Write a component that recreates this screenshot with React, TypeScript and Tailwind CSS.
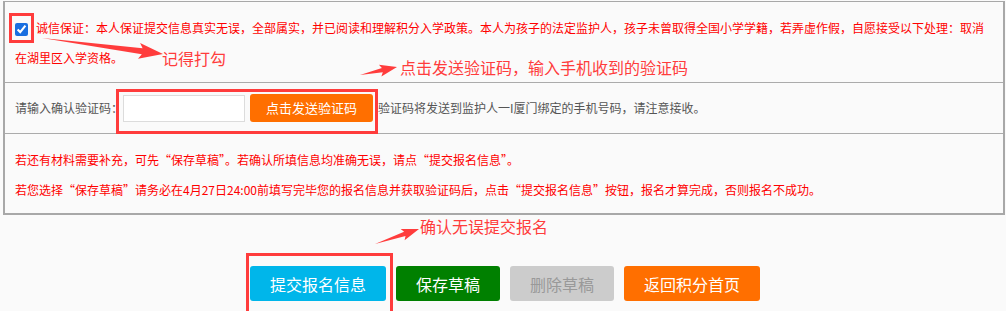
const RED = "#ff3c3c";

function arrowPoints(x1: number, y1: number, x2: number, y2: number, head: number, half: number, shaft: number) {
  const dx = x2 - x1;
  const dy = y2 - y1;
  const len = Math.hypot(dx, dy);
  const ux = dx / len;
  const uy = dy / len;
  const nx = -uy;
  const ny = ux;
  const bx = x2 - ux * head;
  const by = y2 - uy * head;
  const cx = x2 - ux * head * 1.15;
  const cy = y2 - uy * head * 1.15;
  const pts = [
    [x1, y1],
    [bx + nx * shaft, by + ny * shaft],
    [cx + nx * half, cy + ny * half],
    [x2, y2],
    [cx - nx * half, cy - ny * half],
    [bx - nx * shaft, by - ny * shaft],
  ];
  return pts.map((p) => p.map((v) => v.toFixed(1)).join(",")).join(" ");
}

function Arrows() {
  return (
    <svg className="pointer-events-none absolute left-0 top-0" width="1006" height="311" viewBox="0 0 1006 311">
      <polygon points={arrowPoints(42, 38, 163, 54, 21, 8, 3)} fill={RED} />
      <polygon points={arrowPoints(360, 75, 397, 67, 15, 6, 2.2)} fill={RED} />
      <polygon points={arrowPoints(375, 244, 419, 229, 15, 6, 2.2)} fill={RED} />
    </svg>
  );
}

export default function App() {
  return (
    <div className="relative h-[311px] w-[1006px] overflow-hidden bg-[#fafafa] font-['Noto_Sans_CJK_SC',sans-serif]">
      <div className="ml-[3px] mr-px mt-px border-x-2 border-b-2 border-t border-[#a8a8a8]">
        <div className="border-b border-[#ababab] px-[10px] pb-[9px] pt-[11px] text-[12px] leading-[30px] text-[#ff0000]">
          <input
            type="checkbox"
            defaultChecked
            className="m-0 mr-2 inline-block h-[13px] w-[13px] align-middle accent-[#1a6fe0]"
          />
          诚信保证：本人保证提交信息真实无误，全部属实，并已阅读和理解积分入学政策。本人为孩子的法定监护人，孩子未曾取得全国小学学籍，若弄虚作假，自愿接受以下处理：取消在湖里区入学资格。
        </div>

        <div className="flex h-[51px] items-center border-b border-[#ababab] px-[10px] text-[12px] text-[#555]">
          <span>请输入确认验证码：</span>
          <input type="text" className="h-[27px] w-[122px] border border-[#dcdcdc] bg-white outline-none" />
          <button className="ml-[5px] h-[28px] w-[123px] rounded-[3px] bg-[#ff6f00] text-[13px] text-white">
            点击发送验证码
          </button>
          <span className="ml-[5px]">验证码将发送到监护人一I厦门绑定的手机号码，请注意接收。</span>
        </div>

        <div className="px-[10px] pb-[8px] pt-[11px] text-[12px] leading-[30px] text-[#ff0000]">
          <p>若还有材料需要补充，可先“保存草稿”。若确认所填信息均准确无误，请点“提交报名信息”。</p>
          <p>若您选择“保存草稿”请务必在4月27日24:00前填写完毕您的报名信息并获取验证码后，点击“提交报名信息”按钮，报名才算完成，否则报名不成功。</p>
        </div>
      </div>

      <div className="ml-[250px] mt-[51px] flex gap-[10px] text-[16px] text-white">
        <button className="h-[35px] w-[136px] rounded-[3px] bg-[#00b6ea]">提交报名信息</button>
        <button className="h-[35px] w-[104px] rounded-[3px] bg-[#008000]">保存草稿</button>
        <button className="h-[35px] w-[104px] rounded-[3px] bg-[#cccccc] text-[#999]">删除草稿</button>
        <button className="h-[35px] w-[136px] rounded-[3px] bg-[#ff6f00]">返回积分首页</button>
      </div>

      {/* annotation marks */}
      <div className="absolute left-[9px] top-[13px] h-[30px] w-[25px] border-[3px] border-[#ff3c3c]" />
      <div className="absolute left-[116px] top-[89px] h-[45px] w-[262px] border-[3px] border-[#ff3c3c]" />
      <div className="absolute left-[246px] top-[253px] h-[70px] w-[147px] border-[3px] border-[#ff3c3c]" />
      <Arrows />
      <div className="absolute left-[162px] top-[50px] text-[16px] leading-[16px] text-[#ff3c3c]">记得打勾</div>
      <div className="absolute left-[400px] top-[59px] text-[16px] leading-[16px] text-[#ff3c3c]">
        点击发送验证码，输入手机收到的验证码
      </div>
      <div className="absolute left-[420px] top-[218px] text-[16px] leading-[16px] text-[#ff3c3c]">确认无误提交报名</div>
    </div>
  );
}
